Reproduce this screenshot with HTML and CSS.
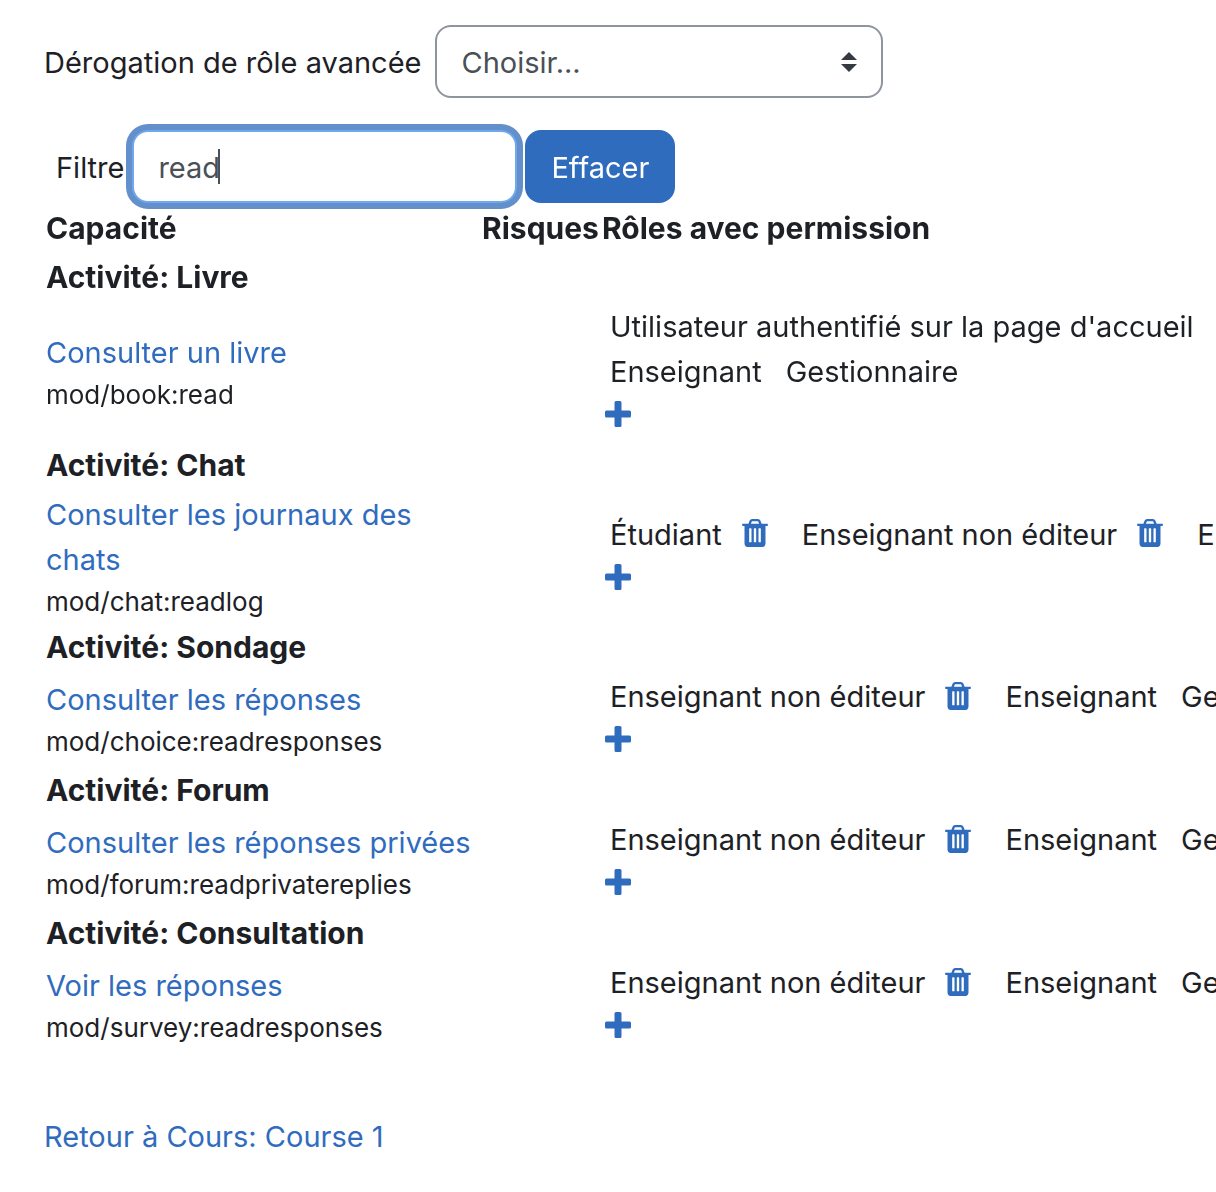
FILE: index.html
```
<!DOCTYPE html>
<html lang="fr">
<head>
  <meta charset="UTF-8" />
  <meta name="viewport" content="width=device-width, initial-scale=1.0"/>
  <title>Permissions</title>
  <link rel="stylesheet" href="styles.css">
</head>
<body>

  <svg class="sprite" aria-hidden="true">
    <symbol id="icon-trash" viewBox="192 128 1408 1536">
      <path d="M704 1376v-704q0-14-9-23t-23-9h-64q-14 0-23 9t-9 23v704q0 14 9 23t23 9h64q14 0 23-9t9-23zm256 0v-704q0-14-9-23t-23-9h-64q-14 0-23 9t-9 23v704q0 14 9 23t23 9h64q14 0 23-9t9-23zm256 0v-704q0-14-9-23t-23-9h-64q-14 0-23 9t-9 23v704q0 14 9 23t23 9h64q14 0 23-9t9-23zm-544-992h448l-48-117q-7-9-17-11h-317q-10 2-17 11zm928 32v64q0 14-9 23t-23 9h-96v948q0 83-47 143.500t-113 60.500h-832q-66 0-113-58.500t-47-141.500v-952h-96q-14 0-23-9t-9-23v-64q0-14 9-23t23-9h309l70-167q15-37 54-63t79-26h320q40 0 79 26t54 63l70 167h309q14 0 23 9t9 23z"/>
    </symbol>
    <symbol id="icon-plus" viewBox="0 0 26 26">
      <path d="M11 0h4q1.500 0 1.500 1.500v8h8q1.500 0 1.500 1.500v4q0 1.500-1.500 1.500h-8v8q0 1.500-1.500 1.500h-4q-1.500 0-1.500-1.500v-8h-8Q0 16.500 0 15v-4q0-1.500 1.500-1.500h8v-8Q9.500 0 11 0z"/>
    </symbol>
  </svg>

  <form class="override-form">
    <label for="role">Dérogation de rôle avancée</label>
    <div class="select-wrap">
      <select id="role">
        <option>Choisir...</option>
      </select>
      <svg class="select-arrows" viewBox="0 0 16 20" aria-hidden="true">
        <path d="M0 8 8 0l8 8zM0 12h16l-8 8z"/>
      </svg>
    </div>
  </form>

  <form class="filter-form">
    <label for="filter">Filtre</label>
    <input type="text" id="filter" class="with-caret" value="read" />
    <button type="button" id="clearBtn">Effacer</button>
  </form>

  <table class="permissions">
    <colgroup>
      <col class="col-capability">
      <col class="col-risks">
      <col>
    </colgroup>
    <thead>
      <tr>
        <th>Capacité</th>
        <th>Risques</th>
        <th>Rôles avec permission</th>
      </tr>
    </thead>
    <tbody>
      <tr>
        <th colspan="3">Activité: Livre</th>
      </tr>
      <tr>
        <td><a href="#">Consulter un livre</a><div class="cap-name">mod/book:read</div></td>
        <td></td>
        <td>
          <div class="roles"><span>Utilisateur authentifié sur la page d'accueil</span></div>
          <div class="roles"><span>Enseignant</span><span>Gestionnaire</span></div>
          <button type="button" class="add" aria-label="Ajouter"><svg><use href="#icon-plus"/></svg></button>
        </td>
      </tr>

      <tr>
        <th colspan="3">Activité: Chat</th>
      </tr>
      <tr>
        <td><a href="#">Consulter les journaux des chats</a><div class="cap-name">mod/chat:readlog</div></td>
        <td></td>
        <td>
          <div class="roles">
            <span>Étudiant <button type="button" class="remove" aria-label="Supprimer"><svg><use href="#icon-trash"/></svg></button></span>
            <span>Enseignant non éditeur <button type="button" class="remove" aria-label="Supprimer"><svg><use href="#icon-trash"/></svg></button></span>
            <span>Enseignant</span>
            <span>Gestionnaire</span>
          </div>
          <button type="button" class="add" aria-label="Ajouter"><svg><use href="#icon-plus"/></svg></button>
        </td>
      </tr>

      <tr>
        <th colspan="3">Activité: Sondage</th>
      </tr>
      <tr>
        <td><a href="#">Consulter les réponses</a><div class="cap-name">mod/choice:readresponses</div></td>
        <td></td>
        <td>
          <div class="roles">
            <span>Enseignant non éditeur <button type="button" class="remove" aria-label="Supprimer"><svg><use href="#icon-trash"/></svg></button></span>
            <span>Enseignant</span>
            <span>Gestionnaire</span>
          </div>
          <button type="button" class="add" aria-label="Ajouter"><svg><use href="#icon-plus"/></svg></button>
        </td>
      </tr>

      <tr>
        <th colspan="3">Activité: Forum</th>
      </tr>
      <tr>
        <td><a href="#">Consulter les réponses privées</a><div class="cap-name">mod/forum:readprivatereplies</div></td>
        <td></td>
        <td>
          <div class="roles">
            <span>Enseignant non éditeur <button type="button" class="remove" aria-label="Supprimer"><svg><use href="#icon-trash"/></svg></button></span>
            <span>Enseignant</span>
            <span>Gestionnaire</span>
          </div>
          <button type="button" class="add" aria-label="Ajouter"><svg><use href="#icon-plus"/></svg></button>
        </td>
      </tr>

      <tr>
        <th colspan="3">Activité: Consultation</th>
      </tr>
      <tr>
        <td><a href="#">Voir les réponses</a><div class="cap-name">mod/survey:readresponses</div></td>
        <td></td>
        <td>
          <div class="roles">
            <span>Enseignant non éditeur <button type="button" class="remove" aria-label="Supprimer"><svg><use href="#icon-trash"/></svg></button></span>
            <span>Enseignant</span>
            <span>Gestionnaire</span>
          </div>
          <button type="button" class="add" aria-label="Ajouter"><svg><use href="#icon-plus"/></svg></button>
        </td>
      </tr>
    </tbody>
  </table>

  <a href="#" class="back-link">Retour à Cours: Course 1</a>

  <script>
    const filter = document.getElementById("filter");
    filter.focus();
    filter.setSelectionRange(filter.value.length, filter.value.length);

    // back to the normal caret once the user touches the field
    function useNormalCaret() {
      filter.classList.remove("with-caret");
    }

    filter.addEventListener("keydown", useNormalCaret);
    filter.addEventListener("mousedown", useNormalCaret);
    filter.addEventListener("blur", useNormalCaret);

    document.getElementById("clearBtn").addEventListener("click", () => {
      useNormalCaret();
      filter.value = "";
      filter.focus();
    });
  </script>
</body>
</html>
```
FILE: styles.css
```
* {
  box-sizing: border-box;
}

body {
  font-family: Inter, "Liberation Sans", sans-serif;
  font-size: 29px;
  line-height: 45px;
  color: #1d2125;
  background: #fff;
  margin: 0;
  padding: 25px 0 32px 44px;
  overflow-x: hidden;
}

a {
  color: #306cbe;
  text-decoration: none;
}

a:hover {
  text-decoration: underline;
}

button,
input,
select {
  font: inherit;
}

button {
  border: none;
  cursor: pointer;
}

.sprite {
  display: none;
}

.override-form {
  display: flex;
  align-items: center;
  gap: 14px;
  margin-bottom: 32px;
}

.override-form label,
.filter-form label {
  padding-top: 2px;
}

.select-wrap {
  position: relative;
  width: 448px;
}

.select-wrap select {
  appearance: none;
  display: block;
  width: 100%;
  height: 73px;
  padding: 2px 56px 0 24px;
  border: 2px solid #8f959e;
  border-radius: 16px;
  background: #fff;
  color: #495057;
}

.select-arrows {
  position: absolute;
  right: 26px;
  top: 27px;
  width: 16px;
  height: 20px;
  fill: #343a40;
  pointer-events: none;
}

.filter-form {
  display: flex;
  align-items: center;
  padding-left: 12px;
}

.filter-form input {
  width: 385px;
  height: 73px;
  margin: 0 8px;
  padding: 2px 24px 0;
  border: 2px solid #6fa8ec;
  border-radius: 16px;
  color: #495057;
  outline: none;
}

.filter-form input:focus {
  box-shadow: 0 0 0 6px #6390cb;
}

.filter-form .with-caret {
  caret-color: transparent;
  background: #fff linear-gradient(#495057, #495057) no-repeat 84px center / 2px 35px;
}

.filter-form button {
  height: 73px;
  padding: 2px 26px 0;
  border-radius: 16px;
  background: #306cbe;
  color: #fff;
}

.permissions {
  table-layout: fixed;
  width: 100%;
  margin-top: 1px;
  margin-bottom: 62px;
  border-collapse: collapse;
}

.permissions th,
.permissions td {
  padding: 2px;
  text-align: left;
  vertical-align: middle;
  white-space: nowrap;
}

.permissions th {
  font-size: 30px;
}

.permissions td:first-child {
  white-space: normal;
}

.col-capability {
  width: 436px;
}

.col-risks {
  width: 120px;
}

.cap-name {
  font-size: 26px;
  line-height: 39px;
}

.roles {
  display: flex;
  gap: 24px;
  padding-left: 8px;
}

.roles span {
  display: flex;
  align-items: center;
  flex-shrink: 0;
}

.remove {
  display: flex;
  margin: 0 10px 0 20px;
  padding: 0 0 2px;
  background: none;
}

.remove svg {
  width: 26px;
  height: 28px;
  fill: #306cbe;
}

.add {
  display: flex;
  height: 45px;
  padding: 7px 3px;
  background: none;
}

.add svg {
  width: 26px;
  height: 26px;
  fill: #306cbe;
}

.back-link {
  display: inline-block;
}
```
